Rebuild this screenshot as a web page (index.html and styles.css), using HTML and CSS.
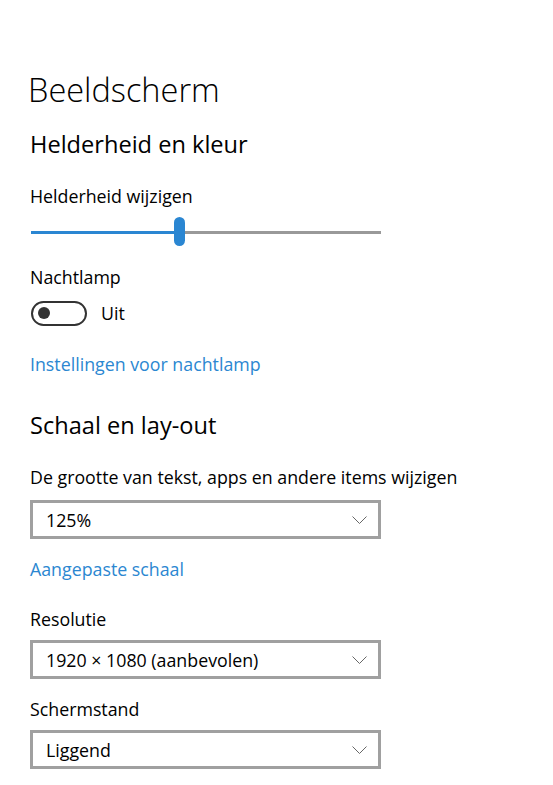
FILE: index.html
```html
<!DOCTYPE html>
<html lang="nl">
<head>
    <meta charset="UTF-8">
    <meta name="viewport" content="width=device-width, initial-scale=1.0">
    <title>Beeldscherm</title>
    <link rel="stylesheet" href="styles.css">
</head>
<body>

<div class="page">
    <h1 class="title">Beeldscherm</h1>

    <h2 class="section first">Helderheid en kleur</h2>

    <div class="label gap-a">Helderheid wijzigen</div>
    <div class="slider">
        <div class="track"></div>
        <div class="fill"></div>
        <div class="thumb"></div>
    </div>

    <div class="label gap-b">Nachtlamp</div>
    <div class="toggle-row">
        <div class="toggle"><span class="knob"></span></div>
        <span class="toggle-text">Uit</span>
    </div>

    <a class="link gap-c" href="#">Instellingen voor nachtlamp</a>

    <h2 class="section second">Schaal en lay-out</h2>

    <div class="label gap-a">De grootte van tekst, apps en andere items wijzigen</div>
    <div class="dropdown first-drop">
        <span>125%</span>
        <svg class="chevron" width="15" height="8" viewBox="0 0 15 8"><polyline points="0.5,0.5 7.5,7.5 14.5,0.5" fill="none" stroke="#666" stroke-width="1"/></svg>
    </div>

    <a class="link gap-b" href="#">Aangepaste schaal</a>

    <div class="label gap-c2">Resolutie</div>
    <div class="dropdown">
        <span>1920 × 1080 (aanbevolen)</span>
        <svg class="chevron" width="15" height="8" viewBox="0 0 15 8"><polyline points="0.5,0.5 7.5,7.5 14.5,0.5" fill="none" stroke="#666" stroke-width="1"/></svg>
    </div>

    <div class="label gap-b">Schermstand</div>
    <div class="dropdown">
        <span>Liggend</span>
        <svg class="chevron" width="15" height="8" viewBox="0 0 15 8"><polyline points="0.5,0.5 7.5,7.5 14.5,0.5" fill="none" stroke="#666" stroke-width="1"/></svg>
    </div>
</div>

</body>
</html>
```

FILE: styles.css
```css
body {
    margin: 0;
    background: #fff;
    color: #000;
    font-family: "Open Sans", "Noto Sans", sans-serif;
}
.page {
    padding: 70px 0 0 30px;
}
.title {
    margin: 0;
    font-size: 32.5px;
    font-weight: 300;
    line-height: 40px;
    margin-left: -2px;
}
.section {
    margin: 0;
    font-size: 23.6px;
    font-weight: 400;
    line-height: 28px;
}
.section.first {
    margin-top: 20px;
}
.section.second {
    margin-top: 37px;
}
.label, .link {
    display: block;
    font-size: 17.8px;
    line-height: 20px;
}
.gap-a { margin-top: 28px; }
.gap-b { margin-top: 20px; }
.gap-c { margin-top: 29px; }
.gap-c2 { margin-top: 30px; }
.link {
    color: #2b87d1;
    text-decoration: none;
}
.slider {
    position: relative;
    width: 350px;
    height: 30px;
    margin-top: 11px;
    margin-left: 1px;
}
.track {
    position: absolute;
    left: 0;
    right: 0;
    top: 14px;
    height: 3px;
    background: #999;
}
.fill {
    position: absolute;
    left: 0;
    width: 145px;
    top: 14px;
    height: 3px;
    background: #2a86d2;
}
.thumb {
    position: absolute;
    left: 143px;
    top: 0;
    width: 11px;
    height: 29px;
    border-radius: 6px;
    background: #2a86d2;
}
.toggle-row {
    display: flex;
    align-items: center;
    margin-top: 14px;
    height: 24px;
}
.toggle {
    width: 56px;
    height: 25px;
    box-sizing: border-box;
    border: 2.5px solid #333;
    border-radius: 13px;
    display: flex;
    align-items: center;
    padding-left: 5px;
    margin-left: 1px;
}
.knob {
    width: 12px;
    height: 12px;
    border-radius: 50%;
    background: #333;
}
.toggle-text {
    font-size: 17.8px;
    margin-left: 14px;
}
.dropdown {
    width: 351px;
    height: 39px;
    box-sizing: border-box;
    border: 3px solid #a0a0a0;
    margin-top: 11px;
    display: flex;
    align-items: center;
    justify-content: space-between;
    padding: 0 11px 0 13px;
    font-size: 17.8px;
}
.dropdown.first-drop {
    margin-top: 13px;
}
.chevron {
    display: block;
}
```
